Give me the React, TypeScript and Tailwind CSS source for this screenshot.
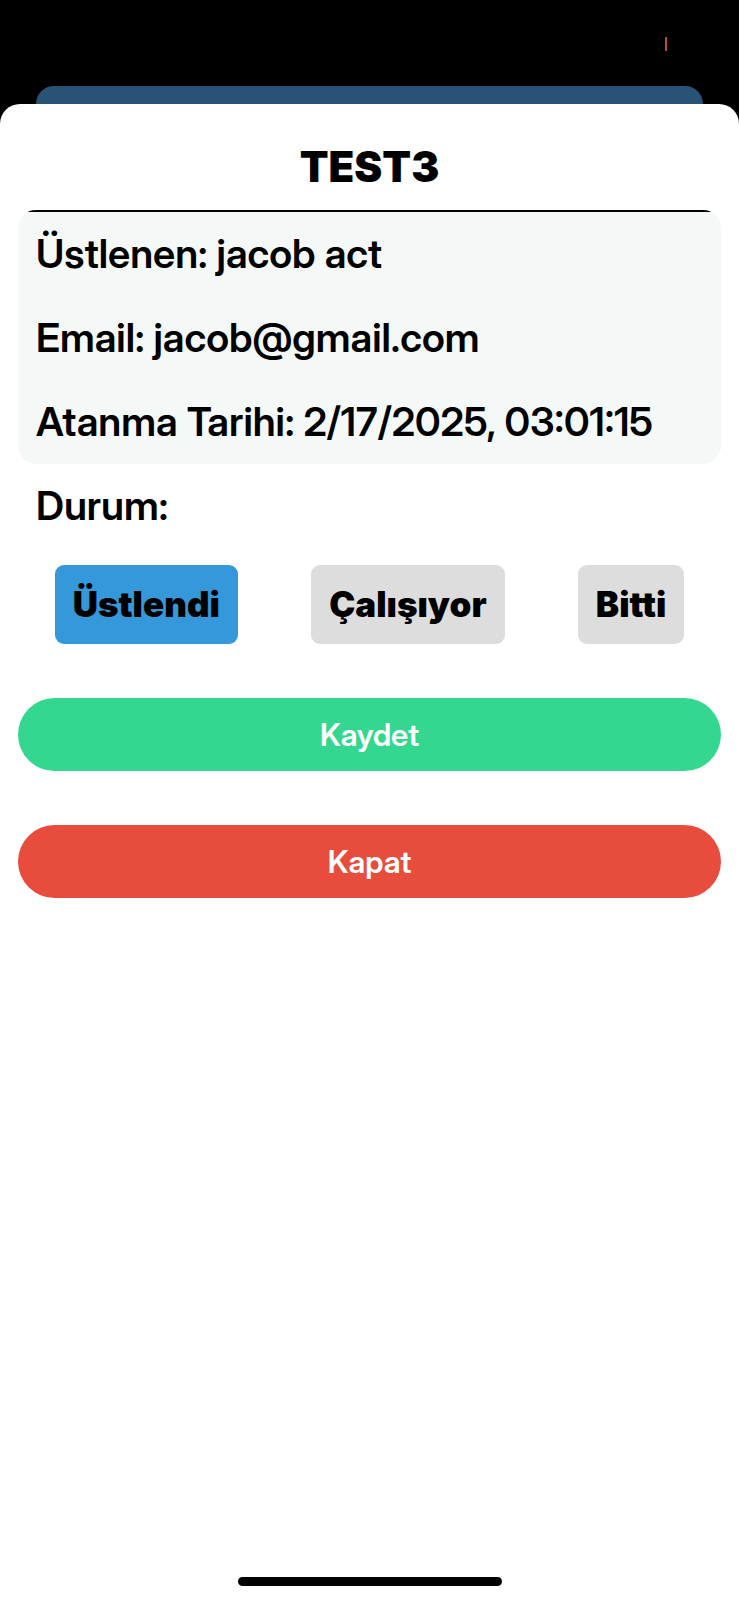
import { useState } from "react";

const details = [
  { label: "Üstlenen", value: "jacob act" },
  { label: "Email", value: "jacob@gmail.com" },
  { label: "Atanma Tarihi", value: "2/17/2025, 03:01:15" },
];

const statuses = ["Üstlendi", "Çalışıyor", "Bitti"];

export default function App() {
  const [status, setStatus] = useState("Üstlendi");

  return (
    <div className="flex min-h-screen flex-col bg-black font-['Inter_Display','Inter','Liberation_Sans',sans-serif] text-black">
      <div className="flex h-[86px] items-center justify-end pr-[72px]">
        <div className="mt-0.5 h-3.5 w-0.5 bg-[#c4453f]" />
      </div>
      <div className="mx-9 h-[18px] rounded-t-[18px] bg-[#285276]" />
      <main className="flex grow flex-col rounded-t-[20px] bg-white px-[18px]">
        <h1 className="pt-[37px] pb-[17px] text-center font-['Inter','Liberation_Sans',sans-serif] text-[42px] leading-[52px] font-black">
          TEST3
        </h1>
        <section className="overflow-hidden rounded-[18px] bg-[#f4f8f7]">
          <div className="h-0.5 bg-black" />
          {details.map((item) => (
            <p key={item.label} className="px-[18px] py-[18px] text-[40px] leading-[48px] font-semibold">
              {item.label}: {item.value}
            </p>
          ))}
        </section>
        <p className="px-[18px] py-[18px] text-[40px] leading-[48px] font-semibold">Durum:</p>
        <div className="mt-[17px] flex justify-around">
          {statuses.map((name) => (
            <button
              key={name}
              type="button"
              aria-pressed={status === name}
              onClick={() => setStatus(name)}
              className={`rounded-[9px] px-[18px] py-[18px] font-['Inter','Liberation_Sans',sans-serif] text-[35px] leading-[43px] font-black ${
                status === name ? "bg-[#3498db]" : "bg-[#dddddd]"
              }`}
            >
              {name}
            </button>
          ))}
        </div>
        <button type="button" className="mt-[54px] rounded-full bg-[#34d78f] py-[18px] text-[31px] leading-[37px] font-semibold text-white">
          Kaydet
        </button>
        <button type="button" className="mt-[54px] rounded-full bg-[#e74c3c] py-[18px] text-[31px] leading-[37px] font-semibold text-white">
          Kapat
        </button>
        <div className="mx-auto mt-auto mb-3.5 h-[9px] w-[264px] rounded-full bg-black" />
      </main>
    </div>
  );
}
